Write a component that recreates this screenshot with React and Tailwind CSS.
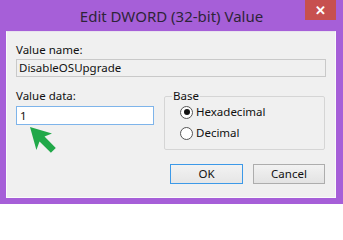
import React from "react";

const font = { fontFamily: '"Noto Sans", "Open Sans", sans-serif' };

export default function App() {
  return (
    <div
      className="relative w-[343px] h-[204px] bg-[#a65fd8] flex flex-col overflow-hidden"
      style={font}
    >
      <div className="relative h-[31px] flex items-center justify-center">
        <span className="text-[15px] leading-none text-[#2e2438] mt-[1px]">Edit DWORD (32-bit) Value</span>
        <button className="absolute right-[7px] top-0 w-[31px] h-[20px] bg-[#c7504f] flex items-center justify-center text-white text-[13px] font-bold leading-none">
          ✕
        </button>
      </div>
      <div className="ml-[6px] w-[330px] h-[167px] bg-[#f0f0f0] border border-[#fbfbfb] border-t-[#e8e2ee] px-[9px] pt-[10px] flex flex-col text-[11.5px] text-[#111]">
        <div className="leading-[16px]">Value name:</div>
        <div className="mt-[1px] h-[18px] w-[310px] border border-[#c9c9c9] bg-[#f0f0f0] pl-[2px] flex items-center leading-none">
          DisableOSUpgrade
        </div>
        <div className="mt-[11px] flex">
          <div className="flex flex-col w-[148px]">
            <div className="leading-[16px]">Value data:</div>
            <div className="mt-[2px] h-[19px] w-[138px] border border-[#7eb4ea] bg-white pl-[3px] flex items-center leading-none">
              1
            </div>
          </div>
          <fieldset className="w-[161px] h-[62px] border border-[#d5d5d5] rounded-[2px] px-[8px]">
            <legend className="px-[1px] leading-[16px] ml-[-1px]">Base</legend>
            <div className="flex flex-col gap-[7px] mt-[1px] ml-[7px]">
              <label className="flex items-center gap-[3px] leading-[14px]">
                <span className="w-[13px] h-[13px] rounded-full border border-[#555] bg-white flex items-center justify-center">
                  <span className="w-[6px] h-[6px] rounded-full bg-[#111]" />
                </span>
                Hexadecimal
              </label>
              <label className="flex items-center gap-[3px] leading-[14px]">
                <span className="w-[13px] h-[13px] rounded-full border border-[#555] bg-white" />
                Decimal
              </label>
            </div>
          </fieldset>
        </div>
        <div className="mt-[14px] flex justify-end gap-[10px] pr-[1px]">
          <button className="w-[73px] h-[20px] border border-[#3c99e8] bg-gradient-to-b from-[#f2f2f2] to-[#e6e6e6] leading-none">
            OK
          </button>
          <button className="w-[72px] h-[20px] border border-[#adadad] bg-gradient-to-b from-[#f2f2f2] to-[#e3e3e3] leading-none">
            Cancel
          </button>
        </div>
      </div>
      <svg className="absolute left-0 top-0" width="343" height="204" viewBox="0 0 343 204">
        <polygon
          points="30,127 52,133.4 44.5,136.6 55.8,147.9 50.9,152.8 39.5,141.5 36.4,150"
          fill="#21a849"
        />
      </svg>
    </div>
  );
}
